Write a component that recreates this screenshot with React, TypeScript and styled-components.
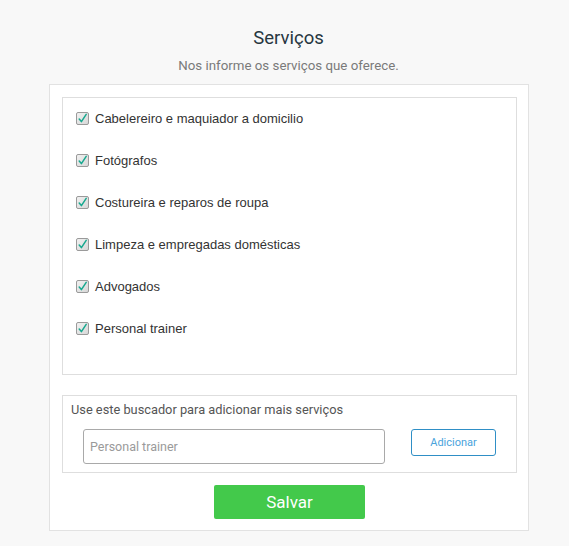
import React from "react";
import styled, { createGlobalStyle } from "styled-components";

const Global = createGlobalStyle`
  html, body { margin: 0; padding: 0; background: #f8f8f8; }
  body { font-family: Roboto, "Liberation Sans", Arial, sans-serif; }
  * { box-sizing: border-box; }
`;

const Page = styled.div`
  width: 569px;
  min-height: 546px;
  padding-top: 26px;
  background: #f8f8f8;
`;

const Header = styled.header`
  display: flex;
  flex-direction: column;
  align-items: center;
  padding-left: 8px;
`;

const Title = styled.h1`
  margin: 0;
  font-family: Roboto, sans-serif;
  font-weight: 400;
  font-size: 18.5px;
  line-height: 24px;
  color: #263640;
`;

const Subtitle = styled.p`
  margin: 7px 0 0;
  font-family: Roboto, sans-serif;
  font-size: 13.3px;
  line-height: 18px;
  color: #7a7a7a;
`;

const Card = styled.section`
  margin: 9px 0 0 49px;
  width: 480px;
  background: #fff;
  border: 1px solid #e2e2e2;
  padding: 12px 11px 11px 12px;
  display: flex;
  flex-direction: column;
`;

const ListBox = styled.div`
  height: 278px;
  border: 1px solid #dedede;
  padding: 12px 13px 0;
  display: flex;
  flex-direction: column;
  gap: 26px;
`;

const Item = styled.label`
  display: flex;
  align-items: center;
  gap: 6px;
  height: 16px;
  font-family: "Liberation Sans", Arial, sans-serif;
  font-size: 13px;
  color: #333;
`;

const SearchBox = styled.div`
  margin-top: 20px;
  height: 78px;
  border: 1px solid #dedede;
  padding: 5px 8px 0;
`;

const SearchLabel = styled.div`
  font-family: Roboto, sans-serif;
  font-size: 12.8px;
  line-height: 18px;
  color: #555;
`;

const SearchRow = styled.div`
  display: flex;
  align-items: flex-start;
  margin: 10px 0 0 12px;
  gap: 26px;
`;

const Input = styled.input`
  width: 302px;
  height: 35px;
  border: 1px solid #a9a9a9;
  border-radius: 3px;
  padding: 0 6px;
  font-family: Roboto, sans-serif;
  font-size: 12.5px;
  color: #333;
  outline: none;
  &::placeholder { color: #9a9a9a; }
`;

const AddButton = styled.button`
  width: 85px;
  height: 27px;
  background: #fff;
  border: 1px solid #2f8fc6;
  border-radius: 3px;
  font-family: Roboto, sans-serif;
  font-size: 11px;
  color: #4aa3dc;
  padding: 0;
  cursor: pointer;
`;

const SaveButton = styled.button`
  align-self: center;
  margin-top: 12px;
  width: 151px;
  height: 34px;
  background: #43c94b;
  border: none;
  border-radius: 2px;
  color: #fff;
  font-family: Roboto, sans-serif;
  font-size: 17px;
  cursor: pointer;
`;

const CheckIcon = () => (
  <svg width="13" height="13" viewBox="0 0 13 13">
    <defs>
      <linearGradient id="cbg" x1="0" y1="0" x2="1" y2="1">
        <stop offset="0" stopColor="#f2f2f2" />
        <stop offset="1" stopColor="#d6d6d6" />
      </linearGradient>
    </defs>
    <rect x="0.5" y="0.5" width="12" height="12" rx="1.5" fill="url(#cbg)" stroke="#9a9a9a" />
    <path d="M3.2 7 L5.4 9.6 L10.2 2.4" fill="none" stroke="#17a88f" strokeWidth="1.5" strokeLinecap="round" strokeLinejoin="round" />
  </svg>
);

const services = [
  "Cabelereiro e maquiador a domicilio",
  "Fotógrafos",
  "Costureira e reparos de roupa",
  "Limpeza e empregadas domésticas",
  "Advogados",
  "Personal trainer",
];

export default function App() {
  return (
    <>
      <Global />
      <Page>
        <Header>
          <Title>Serviços</Title>
          <Subtitle>Nos informe os serviços que oferece.</Subtitle>
        </Header>
        <Card>
          <ListBox>
            {services.map((s) => (
              <Item key={s}>
                <CheckIcon />
                {s}
              </Item>
            ))}
          </ListBox>
          <SearchBox>
            <SearchLabel>Use este buscador para adicionar mais serviços</SearchLabel>
            <SearchRow>
              <Input placeholder="Personal trainer" />
              <AddButton>Adicionar</AddButton>
            </SearchRow>
          </SearchBox>
          <SaveButton>Salvar</SaveButton>
        </Card>
      </Page>
    </>
  );
}
